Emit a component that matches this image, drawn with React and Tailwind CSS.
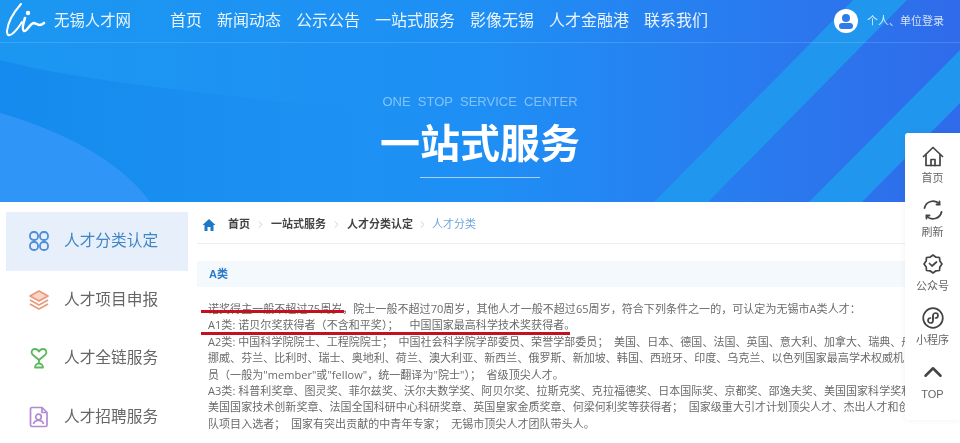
import { ChevronRight, ChevronUp } from 'lucide-react';

const NAV = ['首页', '新闻动态', '公示公告', '一站式服务', '影像无锡', '人才金融港', '联系我们'];

const LINES = [
  '诺奖得主一般不超过75周岁，院士一般不超过70周岁，其他人才一般不超过65周岁，符合下列条件之一的，可认定为无锡市A类人才：',
  'A1类: 诺贝尔奖获得者（不含和平奖）；\u2003中国国家最高科学技术奖获得者。',
  'A2类: 中国科学院院士、工程院院士；\u2002中国社会科学院学部委员、荣誉学部委员；\u2002美国、日本、德国、法国、英国、意大利、加拿大、瑞典、丹',
  '挪威、芬兰、比利时、瑞士、奥地利、荷兰、澳大利亚、新西兰、俄罗斯、新加坡、韩国、西班牙、印度、乌克兰、以色列国家最高学术权威机',
  '员（一般为"member"或"fellow"，统一翻译为"院士"）；\u2002省级顶尖人才。',
  'A3类: 科普利奖章、图灵奖、菲尔兹奖、沃尔夫数学奖、阿贝尔奖、拉斯克奖、克拉福德奖、日本国际奖、京都奖、邵逸夫奖、美国国家科学奖和',
  '美国国家技术创新奖章、法国全国科研中心科研奖章、英国皇家金质奖章、何梁何利奖等获得者；\u2002国家级重大引才计划顶尖人才、杰出人才和创',
  '队项目入选者；\u2002国家有突出贡献的中青年专家；\u2002无锡市顶尖人才团队带头人。',
];

const GridIcon = () => (
  <svg width="22" height="22" viewBox="0 0 22 22" fill="none" stroke="#4a8fd8" strokeWidth="1.8">
    <rect x="2" y="2" width="8" height="8" rx="3.500" />
    <rect x="12" y="2" width="8" height="8" rx="3.500" />
    <rect x="2" y="12" width="8" height="8" rx="3.500" />
    <rect x="12" y="12" width="8" height="8" rx="3.500" />
  </svg>
);

const LayersIcon = () => (
  <svg width="22" height="22" viewBox="0 0 22 22" fill="none" stroke="#e9997c" strokeWidth="1.7" strokeLinejoin="round">
    <path d="M11 2 20 7 11 12 2 7Z" fill="#f7d5c8" />
    <path d="M2 11 11 16 20 11" />
    <path d="M2 15 11 20 20 15" />
  </svg>
);

const TrophyIcon = () => (
  <svg width="22" height="22" viewBox="0 0 22 22" fill="none" stroke="#5cb85c" strokeWidth="1.800" strokeLinejoin="round" strokeLinecap="round">
    <path d="M11 13 4.500 7.500C2.500 5 4 2 6.800 2 8.800 2 10.200 3 11 4.500 11.800 3 13.200 2 15.200 2 18 2 19.500 5 17.500 7.500Z" />
    <path d="M11 13V16" />
    <path d="M7 20.500C7 18 9 16.500 11 16.500S15 18 15 20.500Z" />
  </svg>
);

const ResumeIcon = () => (
  <svg width="20" height="22" viewBox="0 0 20 22" fill="none" stroke="#b18ad2" strokeWidth="1.700" strokeLinejoin="round">
    <path d="M3 1.500H13L18 6.500V19A1.500 1.500 0 0 1 16.500 20.500H3A1.500 1.500 0 0 1 1.500 19V3A1.500 1.500 0 0 1 3 1.500Z" />
    <path d="M13 1.500V6.500H18" />
    <circle cx="9.500" cy="11" r="2.800" />
    <path d="M4.500 18C5 15.500 7 14.500 9.500 14.500S14 15.500 14.500 18" />
  </svg>
);

const SIDE = [
  { label: '人才分类认定', icon: <GridIcon />, active: true },
  { label: '人才项目申报', icon: <LayersIcon /> },
  { label: '人才全链服务', icon: <TrophyIcon /> },
  { label: '人才招聘服务', icon: <ResumeIcon /> },
];

const HomeIcon = () => (
  <svg width="22" height="21" viewBox="0 0 22 21" fill="none" stroke="#444" strokeWidth="1.700" strokeLinejoin="round" strokeLinecap="round">
    <path d="M1.500 10.500 11 1.500 20.500 10.500" />
    <path d="M4 8.500V19.500H18V8.500" />
    <path d="M9 19.500V13.500H13V19.500" />
  </svg>
);

const RefreshIcon = () => (
  <svg width="22" height="22" viewBox="0 0 22 22" fill="none" stroke="#444" strokeWidth="1.800" strokeLinecap="round">
    <path d="M2.500 9A8.800 8.800 0 0 1 17.500 5" />
    <path d="M19.500 13A8.800 8.800 0 0 1 4.500 17" />
    <path d="M17.500 2.500V5.500H14.500" />
    <path d="M4.500 19.500V16.500H7.500" />
  </svg>
);

const BadgeIcon = () => (
  <svg width="22" height="22" viewBox="0 0 22 22" fill="none" stroke="#444" strokeWidth="1.700" strokeLinejoin="round" strokeLinecap="round">
    <path d="M11 2 14 4.200 17.500 4.500 17.800 8 20 11 17.800 14 17.500 17.500 14 17.800 11 20 8 17.800 4.500 17.500 4.200 14 2 11 4.200 8 4.500 4.500 8 4.200Z" />
    <path d="M7.500 10.500 10 13 14.500 9" />
  </svg>
);

const MiniIcon = () => (
  <svg width="22" height="22" viewBox="0 0 22 22" fill="none" stroke="#444" strokeWidth="1.700" strokeLinecap="round">
    <circle cx="11" cy="11" r="9.800" />
    <path d="M11 9V13.500A2.500 2.500 0 1 1 8.500 11" />
    <path d="M11 12.500V8.500A2.500 2.500 0 1 1 13.500 11" />
  </svg>
);

const FLOAT = [
  { label: '首页', icon: <HomeIcon /> },
  { label: '刷新', icon: <RefreshIcon /> },
  { label: '公众号', icon: <BadgeIcon /> },
  { label: '小程序', icon: <MiniIcon /> },
  { label: 'TOP', icon: <ChevronUp size={30} color="#444" strokeWidth={2} className="-my-1" /> },
];

export default function App() {
  return (
    <div className="relative w-[960px] h-[443px] overflow-hidden bg-white font-['Liberation_Sans','Noto_Sans_CJK_SC',sans-serif] blur-[0.45px]">
      {/* Banner */}
      <div className="relative h-[202px] bg-gradient-to-r from-[#1b97f1] via-[#1e8ff5] to-[#2f6bea] overflow-hidden">
        <svg className="absolute inset-0" width="960" height="202" viewBox="0 0 960 202">
          <defs>
            <linearGradient id="leftShade" x1="0" y1="0" x2="1" y2="0">
              <stop offset="0" stopColor="#1180ec" stopOpacity="0.55" />
              <stop offset="1" stopColor="#1180ec" stopOpacity="0" />
            </linearGradient>
          </defs>
          <path d="M0 60C60 75 120 85 360 110V202H0Z" fill="url(#leftShade)" />
          <path d="M0 113C60 130 120 160 150 202H0Z" fill="#2f96f7" />
          <path d="M853 0H907L708 202H654Z" fill="#2196ee" />
          <path d="M960 50V103L862 202H809Z" fill="#2196ee" />
        </svg>

        <header className="relative h-[43px] flex items-center border-b border-white/15">
          <svg className="ml-[5px] shrink-0" width="42" height="36" viewBox="0 0 42 36" fill="none" stroke="white" strokeLinecap="round" strokeLinejoin="round">
            <path d="M16 1C9 9 3 18 2 28 2 33 4 33 7 31 11 28 14 24 17 19" strokeWidth="2" />
            <path d="M20 15C18 21 17 27 19 28 22 29 25 20 29 20 33 21 34 24 39 20" strokeWidth="2.600" />
            <circle cx="23" cy="10" r="2.200" fill="white" stroke="none" />
          </svg>
          <span className="ml-[7px] w-[116px] text-[15.400px] text-white/90 shrink-0">无锡人才网</span>
          <nav className="flex gap-[15px] text-[16px] text-white/90 shrink-0">
            {NAV.map((item) => (
              <span key={item}>{item}</span>
            ))}
          </nav>
          <div className="ml-[126px] flex items-center shrink-0">
            <div className="relative w-6 h-6 rounded-full bg-white overflow-hidden flex flex-col items-center">
              <span className="mt-[5px] w-[8px] h-[8px] rounded-full bg-[#2f7be8]" />
              <span className="mt-[1px] w-[14px] h-[6px] rounded-[3px] bg-[#2f7be8]" />
            </div>
            <span className="ml-[9px] text-[11px] text-white/80">个人、单位登录</span>
          </div>
        </header>

        <div className="relative flex flex-col items-center">
          <p className="mt-[50px] text-[13px] leading-[18px] font-light text-white/45 whitespace-pre">ONE  STOP  SERVICE  CENTER</p>
          <h1 className="mt-[8px] text-[40px] leading-[50px] font-bold text-white">一站式服务</h1>
          <div className="mt-[8px] w-[120px] h-px bg-white/60" />
        </div>
      </div>

      <div className="flex">
        {/* Sidebar */}
        <aside className="ml-[6px] mt-[10px] w-[182px] shrink-0">
          {SIDE.map((item) => (
            <div key={item.label} className={`h-[58.500px] flex items-center ${item.active ? 'bg-[#e7effa]' : ''}`}>
              <div className="ml-[22px] w-[22px] flex justify-center">{item.icon}</div>
              <span className={`ml-[14px] text-[15.700px] ${item.active ? 'text-[#3f86c9]' : 'text-[#666]'}`}>{item.label}</span>
            </div>
          ))}
        </aside>

        {/* Main */}
        <main className="relative flex-1 min-w-0 overflow-hidden">
          <div className="mx-[9px] h-[40px] mt-[2px] flex items-center border-b border-[#e8eef3] text-[11px] pt-[2px] whitespace-nowrap">
            <svg className="ml-[5px]" width="14" height="14" viewBox="0 0 14 14" fill="#1e78c8">
              <path d="M7 1 13.500 7H11.500V13H8.500V9H5.500V13H2.500V7H.5Z" />
            </svg>
            <span className="ml-[12px] font-bold text-[#444]">首页</span>
            <ChevronRight size={11} className="mx-[5px] text-[#ccc]" />
            <span className="font-bold text-[#444]">一站式服务</span>
            <ChevronRight size={11} className="mx-[5px] text-[#ccc]" />
            <span className="font-bold text-[#444]">人才分类认定</span>
            <ChevronRight size={11} className="mx-[4px] text-[#ccc]" />
            <span className="text-[#6ea5dd]">人才分类</span>
          </div>

          <div className="ml-[9px] mt-[17px] w-[708px] h-[26px] flex items-center bg-[#f4f9fe] pl-[12px] text-[11px] font-bold text-[#2a78c8]">A类</div>

          <div className="relative ml-[20px] mt-[14px] w-[697px] h-[132px] font-['Open_Sans','Noto_Sans_CJK_SC',sans-serif] text-[11px] leading-[16.400px] tracking-[0.05px] text-[#6a6a6a] whitespace-nowrap">
            <div className="overflow-hidden">
              {LINES.map((line) => (
                <p key={line}>{line}</p>
              ))}
            </div>
            <span className="absolute left-[-7px] top-[9px] w-[143px] h-[3px] bg-[#c4101f]" />
            <span className="absolute left-[-7px] top-[31px] w-[369px] h-[3px] bg-[#c4101f]" />
          </div>
        </main>
      </div>

      {/* Floating tools */}
      <div className="absolute right-0 top-[133px] w-[55px] h-[287px] bg-white rounded-l-[3px] shadow-[0_0_6px_rgba(0,0,0,0.06)] flex flex-col items-center pt-[12px] gap-[9px]">
        {FLOAT.map((item) => (
          <div key={item.label} className="flex flex-col items-center h-[45px]">
            <div className="h-[22px] flex items-center">{item.icon}</div>
            <span className="mt-[3px] text-[11px] leading-[16px] text-[#666]">{item.label}</span>
          </div>
        ))}
      </div>
    </div>
  );
}
